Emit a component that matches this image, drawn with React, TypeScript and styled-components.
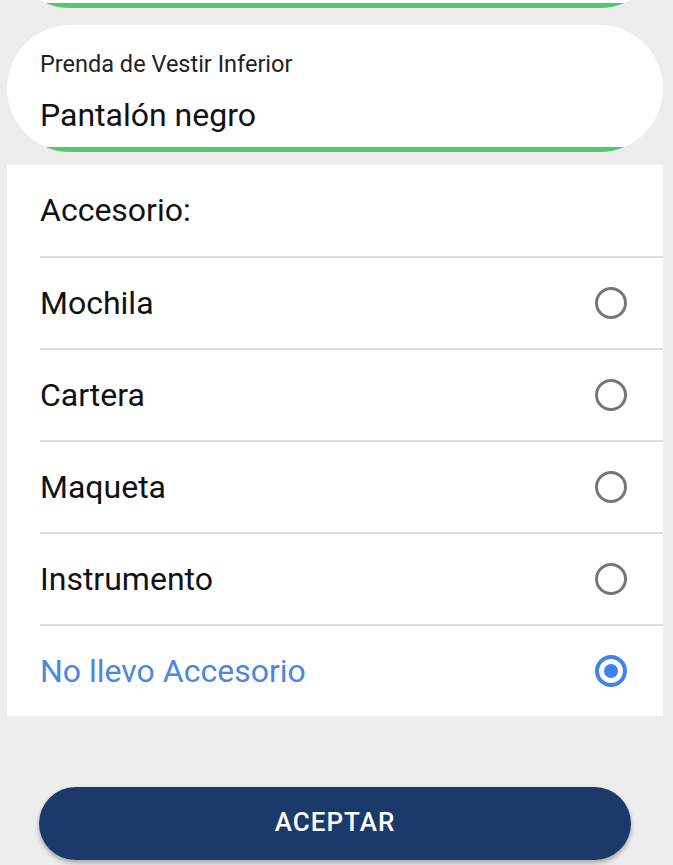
import * as React from 'react';
import styled, { createGlobalStyle } from 'styled-components';

const GlobalStyle = createGlobalStyle`
    html, body {
        margin: 0;
        padding: 0;
        background: #ededed;
        font-family: Roboto, "Noto Sans", Arial, sans-serif;
    }
`;

const Page = styled.div`
    width: 673px;
    height: 865px;
    overflow: hidden;
    display: flex;
    flex-direction: column;
    padding: 0 10px 0 7px;
    box-sizing: border-box;
`;

// the green line is a background band, so the pill's rounding clips it at the ends
const FieldCard = styled.div<{ $scrolled?: boolean }>`
    height: 127px;
    box-sizing: border-box;
    flex-shrink: 0;
    background: linear-gradient(#4fca73, #4fca73) bottom / 100% 5px no-repeat, #fff;
    border-radius: 64px;
    padding: 25px 33px 0;
    margin-top: ${(p) => (p.$scrolled ? '-119px' : '17px')};
`;

const FieldLabel = styled.div`
    font-size: 23.5px;
    color: #222;
    line-height: 28px;
`;

const FieldValue = styled.div`
    font-size: 32px;
    color: #111;
    line-height: 36px;
    margin-top: 19px;
`;

const Options = styled.div`
    margin-top: 13px;
    background: #fff;
    padding-left: 33px;
    display: flex;
    flex-direction: column;
`;

const OptionsTitle = styled.div`
    height: 91px;
    display: flex;
    align-items: center;
    font-size: 32px;
    color: #111;
    box-sizing: border-box;
    padding-bottom: 2px;
`;

const Option = styled.label<{ $checked?: boolean }>`
    height: 92px;
    box-sizing: border-box;
    border-top: 2px solid #dedede;
    display: flex;
    align-items: center;
    justify-content: space-between;
    padding-right: 36px;
    font-size: 32px;
    color: ${(p) => (p.$checked ? '#4a87de' : '#111')};
    cursor: pointer;
`;

const Radio = styled.span<{ $checked?: boolean }>`
    width: 32px;
    height: 32px;
    box-sizing: border-box;
    border-radius: 50%;
    border: ${(p) => (p.$checked ? '4px solid #3f83ef' : '3.5px solid #767676')};
    display: flex;
    align-items: center;
    justify-content: center;

    &::after {
        content: '';
        display: ${(p) => (p.$checked ? 'block' : 'none')};
        width: 14px;
        height: 14px;
        border-radius: 50%;
        background: #3f83ef;
    }
`;

const AcceptButton = styled.button`
    margin: 71px 32px 0;
    height: 73px;
    padding: 0 0 4px;
    flex-shrink: 0;
    border: none;
    border-radius: 37px;
    background: #1b3a6b;
    color: #fff;
    font-family: Roboto, "Noto Sans", Arial, sans-serif;
    font-size: 26px;
    font-weight: 500;
    letter-spacing: 1px;
    box-shadow: 0 3px 5px rgba(0, 0, 0, 0.3);
`;

const accesorios = ['Mochila', 'Cartera', 'Maqueta', 'Instrumento', 'No llevo Accesorio'];

const App: React.FC = () => {
    const [selected, setSelected] = React.useState('No llevo Accesorio');

    return (
        <>
            <GlobalStyle />
            <Page>
                {/* previous field, scrolled almost out of view */}
                <FieldCard $scrolled />
                <FieldCard>
                    <FieldLabel>Prenda de Vestir Inferior</FieldLabel>
                    <FieldValue>Pantalón negro</FieldValue>
                </FieldCard>
                <Options>
                    <OptionsTitle>Accesorio:</OptionsTitle>
                    {accesorios.map((a) => (
                        <Option key={a} $checked={selected === a} onClick={() => setSelected(a)}>
                            <span>{a}</span>
                            <Radio $checked={selected === a} />
                        </Option>
                    ))}
                </Options>
                <AcceptButton>ACEPTAR</AcceptButton>
            </Page>
        </>
    );
};

export default App;
